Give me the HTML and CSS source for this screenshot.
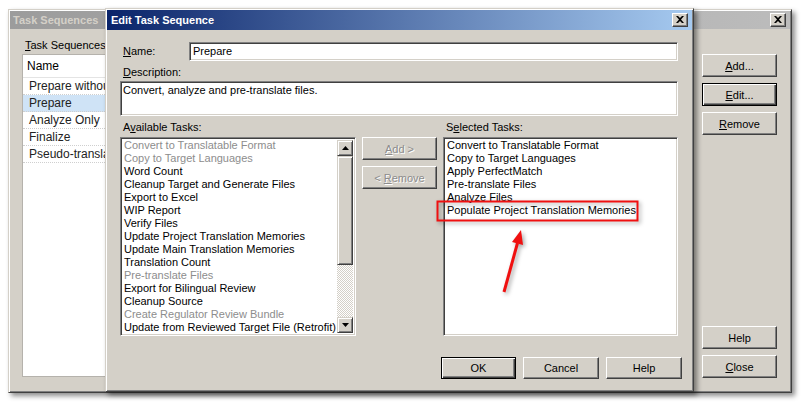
FILE: index.html
```html
<!DOCTYPE html>
<html lang="en">
<head>
    <meta charset="UTF-8">
    <title>Edit Task Sequence</title>
    <link rel="stylesheet" href="styles.css">
</head>
<body>
    <div class="desktop">
        <div class="window main-window">
            <div class="titlebar inactive">
                <span class="title">Task Sequences</span>
                <span class="close-btn">
                    <svg width="8" height="7" viewBox="0 0 8 7"><path d="M0 0h2l2 2 2-2h2L5 3.5 8 7H6L4 5 2 7H0l3-3.5z" fill="#000"/></svg>
                </span>
            </div>
            <div class="main-body">
                <div class="seq-pane">
                    <div class="label"><u>T</u>ask Sequences</div>
                    <div class="seq-list">
                        <div class="seq-head">Name</div>
                        <div class="seq-row">Prepare without</div>
                        <div class="seq-row selected">Prepare</div>
                        <div class="seq-row">Analyze Only</div>
                        <div class="seq-row">Finalize</div>
                        <div class="seq-row">Pseudo-translat</div>
                    </div>
                </div>
                <div class="side-buttons">
                    <div class="btn-stack">
                        <button class="btn"><u>A</u>dd...</button>
                        <button class="btn default"><u>E</u>dit...</button>
                        <button class="btn"><u>R</u>emove</button>
                    </div>
                    <div class="btn-stack bottom">
                        <button class="btn">Help</button>
                        <button class="btn"><u>C</u>lose</button>
                    </div>
                </div>
            </div>
        </div>

        <div class="window dialog">
            <div class="titlebar active">
                <span class="title">Edit Task Sequence</span>
                <span class="close-btn">
                    <svg width="8" height="7" viewBox="0 0 8 7"><path d="M0 0h2l2 2 2-2h2L5 3.5 8 7H6L4 5 2 7H0l3-3.5z" fill="#000"/></svg>
                </span>
            </div>
            <div class="dialog-body">
                <div class="name-row">
                    <span class="label name-label"><u>N</u>ame:</span>
                    <div class="field name-field">Prepare</div>
                </div>
                <div class="label desc-label"><u>D</u>escription:</div>
                <div class="field desc-field">Convert, analyze and pre-translate files.</div>

                <div class="task-grid">
                    <div class="label">A<u>v</u>ailable Tasks:</div>
                    <div></div>
                    <div class="label">S<u>e</u>lected Tasks:</div>

                    <div class="field listbox">
                        <div class="items">
                            <div class="item off">Convert to Translatable Format</div>
                            <div class="item off">Copy to Target Languages</div>
                            <div class="item">Word Count</div>
                            <div class="item">Cleanup Target and Generate Files</div>
                            <div class="item">Export to Excel</div>
                            <div class="item">WIP Report</div>
                            <div class="item">Verify Files</div>
                            <div class="item">Update Project Translation Memories</div>
                            <div class="item">Update Main Translation Memories</div>
                            <div class="item">Translation Count</div>
                            <div class="item off">Pre-translate Files</div>
                            <div class="item">Export for Bilingual Review</div>
                            <div class="item">Cleanup Source</div>
                            <div class="item off">Create Regulator Review Bundle</div>
                            <div class="item">Update from Reviewed Target File (Retrofit)</div>
                        </div>
                        <div class="scrollbar">
                            <div class="sb-btn">
                                <svg width="7" height="4" viewBox="0 0 7 4"><path d="M3.5 0L7 4H0z" fill="#000"/></svg>
                            </div>
                            <div class="sb-thumb"></div>
                            <div class="sb-track"></div>
                            <div class="sb-btn">
                                <svg width="7" height="4" viewBox="0 0 7 4"><path d="M0 0h7L3.5 4z" fill="#000"/></svg>
                            </div>
                        </div>
                    </div>

                    <div class="move-buttons">
                        <button class="btn" disabled><u>A</u>dd &gt;</button>
                        <button class="btn" disabled>&lt; <u>R</u>emove</button>
                    </div>

                    <div class="field listbox">
                        <div class="items">
                            <div class="item">Convert to Translatable Format</div>
                            <div class="item">Copy to Target Languages</div>
                            <div class="item">Apply PerfectMatch</div>
                            <div class="item">Pre-translate Files</div>
                            <div class="item">Analyze Files</div>
                            <div class="item">Populate Project Translation Memories</div>
                        </div>
                    </div>
                </div>

                <div class="dialog-buttons">
                    <button class="btn default">OK</button>
                    <button class="btn wide">Cancel</button>
                    <button class="btn wide">Help</button>
                </div>
            </div>
        </div>

        <svg class="annotation" width="803" height="404" viewBox="0 0 803 404">
            <rect x="437.5" y="201.5" width="200" height="19" fill="none" stroke="#f01010" stroke-width="2"/>
            <line x1="504" y1="292" x2="517.5" y2="243" stroke="#f01010" stroke-width="3"/>
            <polygon points="521,230 512,242 523,245" fill="#f01010"/>
        </svg>
    </div>
</body>
</html>
```

FILE: styles.css
```css
body {
    margin: 0;
    background: #fff;
    font-family: "Liberation Sans", Arial, sans-serif;
    font-size: 11px;
    color: #000;
}
.desktop {
    position: relative;
    width: 803px;
    height: 404px;
    overflow: hidden;
    padding: 9px 0 0 8px;
    box-sizing: border-box;
}
u {
    text-decoration: underline;
    text-underline-offset: 1px;
}

/* window frames */
.window {
    background: #d4d0c8;
    border: 1px solid;
    border-color: #d4d0c8 #404040 #404040 #d4d0c8;
    box-shadow: inset 1px 1px #fff, inset -1px -1px #808080, 3px 3px 5px rgba(0, 0, 0, 0.45);
    padding: 1px;
    box-sizing: border-box;
    display: flex;
    flex-direction: column;
}
.main-window {
    width: 784px;
    height: 384px;
}
.dialog {
    position: absolute;
    left: 105px;
    top: 8px;
    width: 589px;
    height: 384px;
}
.titlebar {
    display: flex;
    align-items: center;
    justify-content: space-between;
    padding: 0 4px 0 3px;
    font-weight: bold;
    flex: none;
}
.titlebar.inactive {
    height: 18px;
    background: linear-gradient(to right, #9c9c9c, #bcbcbc);
    color: #d4d0c8;
}
.titlebar.active {
    height: 20px;
    background: linear-gradient(to right, #0a246a, #a6caf0);
    color: #fff;
    padding-left: 4px;
}
.close-btn {
    width: 16px;
    height: 14px;
    box-sizing: border-box;
    background: #d4d0c8;
    border: 1px solid;
    border-color: #fff #404040 #404040 #fff;
    box-shadow: inset -1px -1px #808080;
    display: flex;
    align-items: center;
    justify-content: center;
    padding: 0 1px 1px 0;
}

/* buttons */
.btn {
    width: 75px;
    height: 23px;
    box-sizing: border-box;
    background: #d4d0c8;
    border: 1px solid;
    border-color: #fff #404040 #404040 #fff;
    box-shadow: inset -1px -1px #808080;
    font-family: inherit;
    font-size: 11px;
    color: #000;
    padding: 0;
}
.btn.default {
    border-color: #000;
    box-shadow: inset 1px 1px #fff, inset -1px -1px #404040, inset -2px -2px #808080;
}
.btn:disabled {
    color: #8c8c8c;
    text-shadow: 1px 1px #fff;
}

/* sunken fields */
.field {
    background: #fff;
    border: 1px solid;
    border-color: #808080 #fff #fff #808080;
    box-shadow: inset 1px 1px #404040, inset -1px -1px #d4d0c8;
    box-sizing: border-box;
}
.label {
    line-height: 13px;
    padding-left: 3px;
}

/* main window body */
.main-body {
    flex: 1;
    display: flex;
    justify-content: space-between;
}
.seq-pane {
    padding: 10px 0 0 12px;
}
.seq-list {
    margin-top: 2px;
    width: 90px;
    height: 323px;
    background: #fff;
    border: 1px solid #b5b2ac;
    box-sizing: border-box;
    white-space: nowrap;
    overflow: hidden;
}
.seq-head {
    height: 23px;
    line-height: 22px;
    padding-left: 4px;
    border-bottom: 1px solid #e4e4e4;
    box-sizing: border-box;
    font-size: 12px;
}
.seq-row {
    height: 17px;
    line-height: 16px;
    padding-left: 6px;
    border-bottom: 1px dotted #cfcfcf;
    box-sizing: border-box;
    font-size: 12px;
    color: #222;
}
.seq-row.selected {
    background: #cfe3f6;
}
.side-buttons {
    display: flex;
    flex-direction: column;
    justify-content: space-between;
    padding: 25px 13px 13px 0;
}
.btn-stack {
    display: flex;
    flex-direction: column;
    gap: 6px;
}

/* dialog body */
.dialog-body {
    padding: 12px 14px 0 13px;
}
.name-row {
    display: flex;
    align-items: center;
    height: 19px;
}
.name-label {
    width: 69px;
    box-sizing: border-box;
}
.name-field {
    flex: 1;
    height: 19px;
    line-height: 17px;
    padding-left: 3px;
}
.desc-label {
    margin-top: 5px;
}
.desc-field {
    margin-top: 2px;
    height: 35px;
    padding: 2px 0 0 2px;
}
.task-grid {
    margin-top: 5px;
    display: grid;
    grid-template-columns: 236px 75px 235px;
    grid-template-rows: 13px 199px;
    column-gap: 6px;
    row-gap: 3px;
}
.listbox {
    display: flex;
    overflow: hidden;
}
.items {
    flex: 1;
    padding: 1px 0 0 3px;
    white-space: nowrap;
    overflow: hidden;
}
.item {
    line-height: 13px;
}
.item.off {
    color: #8d8d8d;
}
.scrollbar {
    width: 16px;
    margin: 2px 2px 2px 0;
    display: flex;
    flex-direction: column;
}
.sb-btn {
    height: 16px;
    box-sizing: border-box;
    background: #d4d0c8;
    border: 1px solid;
    border-color: #d4d0c8 #404040 #404040 #d4d0c8;
    box-shadow: inset 1px 1px #fff, inset -1px -1px #808080;
    display: flex;
    align-items: center;
    justify-content: center;
}
.sb-thumb {
    height: 109px;
    box-sizing: border-box;
    background: #d4d0c8;
    border: 1px solid;
    border-color: #d4d0c8 #404040 #404040 #d4d0c8;
    box-shadow: inset 1px 1px #fff, inset -1px -1px #808080;
}
.sb-track {
    flex: 1;
    background: repeating-conic-gradient(#fff 0 25%, #d4d0c8 0 50%) 0 0 / 2px 2px;
}
.move-buttons {
    display: flex;
    flex-direction: column;
    gap: 6px;
}
.dialog-buttons {
    margin: 21px -4px 0 0;
    display: flex;
    justify-content: flex-end;
    gap: 7px;
}
.dialog-buttons .btn {
    height: 22px;
}
.dialog-buttons .btn.wide {
    width: 76px;
}

/* annotation overlay */
.annotation {
    position: absolute;
    left: 0;
    top: 0;
    pointer-events: none;
    filter: drop-shadow(2px 2px 2px rgba(0, 0, 0, 0.35));
}
```
